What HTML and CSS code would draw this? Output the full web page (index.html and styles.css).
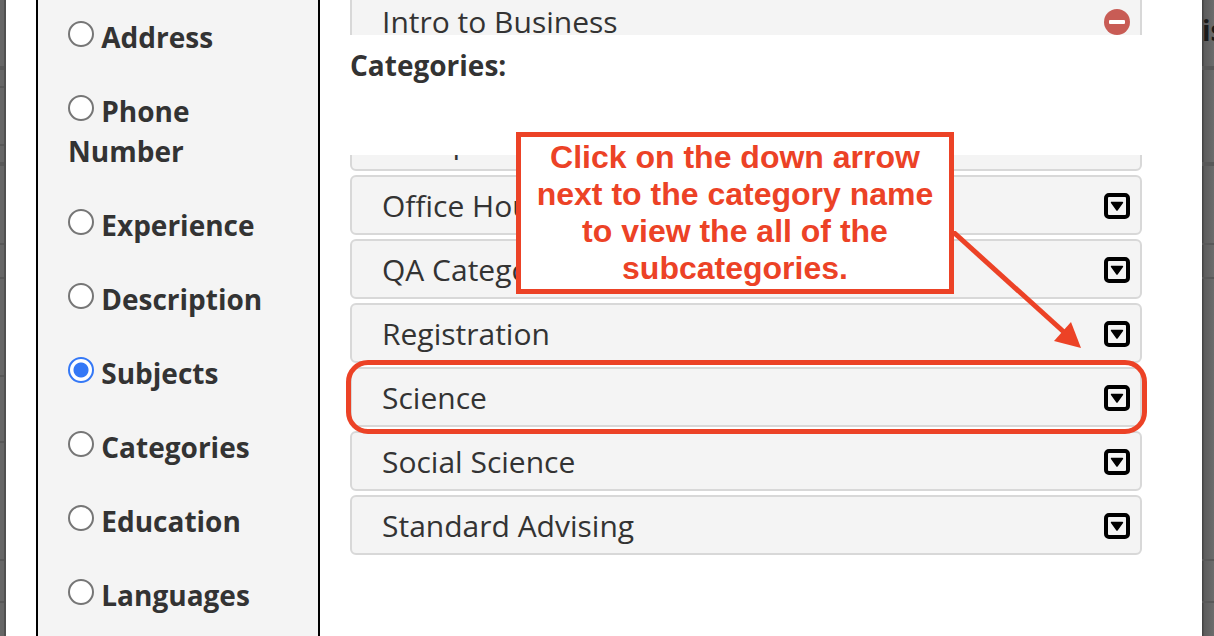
FILE: index.html
```
<!DOCTYPE html>
<html lang="en">
<head>
<meta charset="utf-8">
<title>Edit Profile</title>
<link rel="stylesheet" href="styles.css">
</head>
<body>
	<svg class="defs" aria-hidden="true">
		<symbol id="down" viewBox="0 0 26 26">
			<rect x="2" y="2" width="22" height="22" rx="3" fill="none" stroke="#000" stroke-width="4"/>
			<path d="M7.6 9.5h10.8L13 17z" fill="#000" stroke="#000" stroke-width="1.6" stroke-linejoin="round"/>
		</symbol>
		<symbol id="remove" viewBox="0 0 26 26">
			<circle cx="13" cy="13" r="13" fill="#c85c55"/>
			<rect x="5" y="11" width="16" height="4" rx="1" fill="#fff"/>
		</symbol>
	</svg>
	<div class="page">
		<div class="behind behind-left"></div>
		<div class="modal">
			<form class="sidebar">
				<label><input type="radio" name="section"> Address</label>
				<label><input type="radio" name="section"> Phone Number</label>
				<label><input type="radio" name="section"> Experience</label>
				<label><input type="radio" name="section"> Description</label>
				<label><input type="radio" name="section" checked> Subjects</label>
				<label><input type="radio" name="section"> Categories</label>
				<label><input type="radio" name="section"> Education</label>
				<label><input type="radio" name="section"> Languages</label>
			</form>
			<div class="content">
				<div class="list selected">
					<div class="item">Intro to Business<button type="button" aria-label="Remove"><svg><use href="#remove"/></svg></button></div>
				</div>
				<h2>Categories:</h2>
				<div class="list categories">
					<div class="item">Group<button type="button" aria-label="Expand"><svg><use href="#down"/></svg></button></div>
					<div class="item">Office Hours<button type="button" aria-label="Expand"><svg><use href="#down"/></svg></button></div>
					<div class="item">QA Category<button type="button" aria-label="Expand"><svg><use href="#down"/></svg></button></div>
					<div class="item">Registration<button type="button" aria-label="Expand"><svg><use href="#down"/></svg></button></div>
					<div class="item marked">Science<button type="button" aria-label="Expand"><svg><use href="#down"/></svg></button></div>
					<div class="item">Social Science<button type="button" aria-label="Expand"><svg><use href="#down"/></svg></button></div>
					<div class="item">Standard Advising<button type="button" aria-label="Expand"><svg><use href="#down"/></svg></button></div>
				</div>
				<div class="callout">
					Click on the down arrow next to the category name to view the all of the subcategories.
					<svg class="arrow" viewBox="0 0 130 118">
						<path d="M0 -1L114 102" stroke="#ec4226" stroke-width="5" fill="none"/>
						<path d="M130 117L120 91L103 110z" fill="#ec4226"/>
					</svg>
				</div>
			</div>
		</div>
		<div class="behind behind-right">is</div>
	</div>
</body>
</html>
```
FILE: styles.css
```
body {
 margin: 0;
 overflow: hidden;
 color: #333;
 font-family: "Open Sans", "Noto Sans", sans-serif;
}
.defs {
 position: absolute;
 width: 0;
 height: 0;
}
.page {
 display: flex;
 height: 100vh;
}
/* dimmed table behind the modal */
.behind {
 --line: linear-gradient(#585858, #585858);
 flex: none;
 overflow: hidden;
 background-color: #666;
 background-repeat: no-repeat;
}
.behind-left {
 width: 4px;
 border-right: 2px solid #505050;
 background-image: var(--line), var(--line), var(--line), var(--line), var(--line), var(--line), var(--line), var(--line), var(--line), var(--line);
 background-size: 100% 4px, 100% 2px, 100% 2px, 100% 4px, 100% 2px, 100% 2px, 100% 2px, 100% 2px, 100% 2px, 100% 2px;
 background-position: 0 66px, 0 86px, 0 144px, 0 162px, 0 243px, 0 277px, 0 375px, 0 441px, 0 559px, 0 601px;
}
.behind-right {
 width: 12px;
 box-sizing: border-box;
 padding-top: 10px;
 color: #1a1a1a;
 font-size: 28px;
 font-weight: bold;
 line-height: 40px;
 background-image: var(--line), var(--line), var(--line), var(--line), var(--line), var(--line), linear-gradient(to right, #444 1px, #5c5c5c 2px, #6c6c6c);
 background-size: 100% 4px, 100% 4px, 100% 2px, 100% 2px, 100% 2px, 100% 2px, 100% 100%;
 background-position: 0 66px, 0 162px, 0 243px, 0 277px, 0 559px, 0 601px, 0 0;
}
.modal {
 display: flex;
 flex: 1;
 min-width: 0;
 padding-left: 30px;
 background: #fff;
}
.sidebar {
 display: flex;
 flex-direction: column;
 flex: none;
 gap: 34px;
 width: 220px;
 padding: 17px 30px 0;
 border: solid #000;
 border-width: 0 2px;
 background: #f4f4f4;
 overflow: hidden;
}
.sidebar label, h2 {
 font-size: 28px;
 font-weight: bold;
 line-height: 40px;
}
.sidebar input {
 appearance: none;
 box-sizing: border-box;
 width: 26px;
 height: 26px;
 margin: 0 0 1px;
 border: 2px solid #767676;
 border-radius: 50%;
 background: #fff;
}
.sidebar input:checked {
 border-color: #3478f6;
 background: radial-gradient(circle, #3478f6 7px, #fff 8px);
}
.content {
 position: relative;
 flex: 1;
 min-width: 0;
 padding: 0 60px 0 30px;
}
.list {
 display: flex;
 flex-direction: column;
 gap: 4px;
}
.selected {
 height: 35px;
 overflow: hidden;
}
.selected .item {
 margin-top: -9px;
}
.categories {
 clip-path: inset(0 -10px -10px -10px);
}
/* list is scrolled, first row is cut off */
.categories .item:first-child {
 margin-top: -44px;
}
h2 {
 margin: 10px 0 70px;
}
.item {
 display: flex;
 flex: none;
 align-items: center;
 justify-content: space-between;
 box-sizing: border-box;
 height: 60px;
 padding: 0 10px 0 30px;
 border: 2px solid #d8d8d8;
 border-radius: 6px;
 background: #f4f4f4;
 font-size: 30px;
}
.item button {
 width: 26px;
 height: 26px;
 margin: 2px 0 0;
 padding: 0;
 border: 0;
 background: none;
}
.item svg {
 display: block;
 width: 26px;
 height: 26px;
}
.marked {
 position: relative;
 z-index: 1;
}
.marked::after {
 content: "";
 position: absolute;
 top: -9px;
 right: -7px;
 bottom: -9px;
 left: -6px;
 border: 5px solid #ec4226;
 border-radius: 22px;
}
.callout {
 position: absolute;
 top: 132px;
 left: 196px;
 z-index: 2;
 box-sizing: border-box;
 width: 438px;
 height: 162px;
 padding: 2px 14px 0;
 border: 5px solid #ec4226;
 background: #fff;
 color: #ec4226;
 font: bold 32px/37px "Liberation Sans", Arial, sans-serif;
 text-align: center;
}
.arrow {
 position: absolute;
 top: 94px;
 left: 430px;
 width: 130px;
 height: 118px;
}
```
